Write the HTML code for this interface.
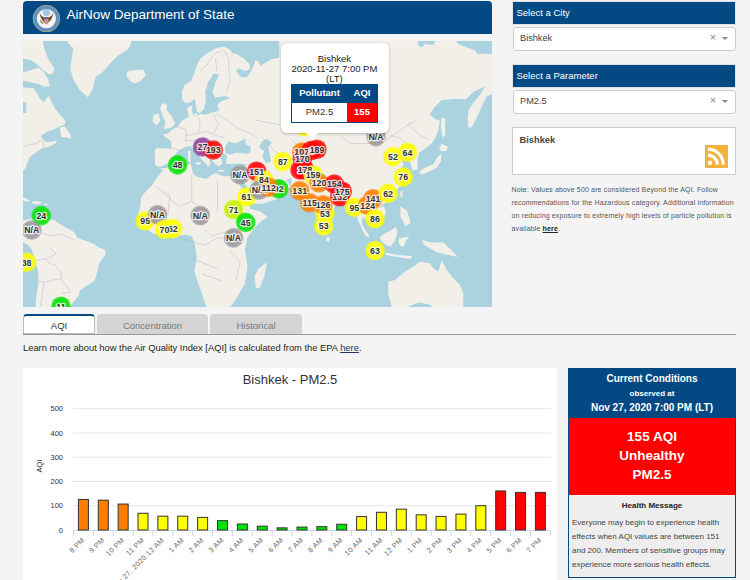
<!DOCTYPE html>
<html><head><meta charset="utf-8">
<style>
*{margin:0;padding:0;box-sizing:border-box}
html,body{width:750px;height:580px;overflow:hidden;background:#f4f4f4;font-family:"Liberation Sans",sans-serif;color:#333}
.abs{position:absolute}
#hdr{left:23px;top:1px;width:469px;height:33px;background:#034a84;border-radius:4px 4px 0 0}
#hdr .t{left:43.5px;top:6.3px;color:#fff;font-size:13.5px;white-space:nowrap}
#map{left:23px;top:41px;width:469px;height:266px;background:#aad3df;overflow:hidden}
.ph{left:512px;width:224px;height:24px;background:#034a84;color:#fff;font-size:9.5px;padding:5px 0 0 3.5px;border:1px solid #e2e2e2}
.sel{left:512.5px;width:223px;height:24px;background:#fff;border:1px solid #ccc;border-radius:3px;font-size:9.2px;color:#444;padding:5.6px 0 0 6.5px}
.sel .x{position:absolute;left:196.3px;top:3.5px;color:#888;font-size:11px}
.sel .ar{position:absolute;left:208.3px;top:9.2px;width:0;height:0;border-left:3px solid transparent;border-right:3px solid transparent;border-top:3px solid #888}
#cbox{left:512.3px;top:127.3px;width:223.4px;height:47.7px;background:#fff;border:1px solid #ccc}
#cbox .n{left:6.2px;top:7px;font-size:9.3px;font-weight:bold;color:#444}
#rss{left:705px;top:145px;width:23px;height:23px;background:#f2b23c;overflow:hidden}
#note{left:511.5px;top:182.8px;width:229px;font-size:7px;letter-spacing:0.15px;line-height:13px;color:#555}
#note b{color:#222;text-decoration:underline}
.tab{top:314px;height:20px;font-size:9.5px;text-align:center;padding-top:5.5px;border-radius:4px 4px 0 0}
#t1{left:23px;width:72px;background:#fff;border:1px solid #bbb;border-top:2px solid #034a84;color:#333;padding-top:3.6px}
#t2{left:97px;width:111px;background:#d4d4d4;color:#777}
#t3{left:210px;width:92px;background:#d4d4d4;color:#777}
#hr{left:23px;top:333.6px;width:713px;height:1.2px;background:#999}
#learn{left:23px;top:343px;font-size:9.35px;color:#222;white-space:nowrap}
#learn u{color:#1f3560}
#chart{left:23px;top:368px;width:534px;height:212px;background:#fff}
#cc{left:568px;top:368px;width:168px;height:210px;border:1px solid #034a84;background:#eee}
#cchead{left:0;top:0;width:166px;height:49px;background:#034a84;color:#fff;text-align:center;font-weight:bold}
#ccred{left:0;top:49px;width:166px;height:76.5px;background:#f00;color:#fff;text-align:center;font-weight:bold;font-size:13.5px;line-height:19.1px;padding-top:60px}
#hm{left:0;top:132px;width:166px;text-align:center;font-weight:bold;font-size:8px;color:#222}
#hmt{left:3px;top:147px;width:160px;font-size:8px;line-height:14px;color:#444}

#pop{left:281px;top:43px;width:108px;height:90px;background:#fff;border-radius:6px;box-shadow:0 1px 3px rgba(0,0,0,0.25)}
#poptip{left:305.8px;top:132.8px;width:0;height:0;border-left:6.6px solid transparent;border-right:6.6px solid transparent;border-top:6px solid #fff}
#pop .l{position:absolute;left:-0.6px;width:108px;text-align:center;font-size:9.5px;color:#222;line-height:10px}
#ptab{left:291px;top:84px;width:87px;height:39px;border:1px solid #034a84;background:#fff}
#ptab .h{position:absolute;left:0;top:0;width:85px;height:18px;background:#034a84}
#ptab .h1{position:absolute;left:0;top:2.3px;width:55px;text-align:center;color:#fff;font-weight:bold;font-size:9.5px}
#ptab .h2{position:absolute;left:55px;top:2.3px;width:30px;text-align:center;color:#fff;font-weight:bold;font-size:9.5px}
#ptab .c1{position:absolute;left:0;top:21px;width:55px;text-align:center;color:#333;font-size:9.5px}
#ptab .c2{position:absolute;left:55px;top:18px;width:30px;height:19px;background:#f00;text-align:center;color:#fff;font-weight:bold;font-size:9.5px;padding-top:3px}
</style></head><body>
<div id="hdr" class="abs">
  <svg class="abs" style="left:9px;top:3px" width="28" height="28" viewBox="0 0 28 28">
    <circle cx="14.4" cy="14.6" r="13.3" fill="#5f8fc6" stroke="#b5ad6a" stroke-width="0.9"/>
    <circle cx="14.4" cy="14.6" r="9.6" fill="#f3f3ef"/>
    <circle cx="14.4" cy="8.6" r="3.6" fill="#a8c8de"/>
    <path d="M7.6 9.2 Q8.6 15 11.6 17.6 L14.4 20.4 L17.2 17.6 Q20.2 15 21.2 9.2 Q19.4 12.6 16.6 13.6 L14.4 13.2 L12.2 13.6 Q9.4 12.6 7.6 9.2Z" fill="#6e4a26"/>
    <path d="M8.4 16.5 Q9.5 19 11.4 19.4" stroke="#5c8a3c" stroke-width="1.3" fill="none"/>
    <path d="M12.3 13.4h4.2v3.4q0 2.4-2.1 3.2q-2.1-.8-2.1-3.2z" fill="#d98a8f"/>
    <rect x="12.3" y="13.4" width="4.2" height="1.6" fill="#3a5ea6"/>
  </svg>
  <div class="abs t">AirNow Department of State</div>
</div>
<div id="map" class="abs"><svg width="469" height="266" viewBox="23 41 469 266" style="position:absolute;left:0;top:0;font-family:'Liberation Sans',sans-serif">
<rect x="23" y="41" width="469" height="266" fill="#aad3df"/>
<path fill="#f2efe9" d="M20.0 87.2 L33.4 88.3 L36.6 92.4 L39.7 98.6 L43.8 102.2 L47.4 97.6 L49.0 95.5 L51.0 100.7 L54.1 106.9 L59.3 114.1 L63.4 118.3 L65.5 121.4 L64.5 124.5 L59.3 126.6 L53.1 129.7 L46.9 131.7 L40.7 135.9 L42.4 138.4 L45.9 141.9 L50.2 141.9 L57.1 140.2 L55.3 143.6 L48.4 147.1 L42.4 148.3 L37.2 151.4 L30.3 156.6 L27.8 161.7 L25.2 168.6 L21.7 172.1 L20.0 172.1ZM20.0 38.0 L42.4 38.0 L44.3 49.1 L48.0 58.4 L54.5 68.7 L52.6 73.4 L48.9 74.3 L42.4 69.6 L36.8 64.0 L31.2 60.3 L23.7 58.4 L20.0 58.0ZM20.0 73.3 L38.7 67.7 L44.0 72.0 L48.0 78.9 L49.9 86.4 L44.0 86.4 L38.7 84.0 L23.7 80.8 L20.0 80.0ZM66.2 38.0 L66.7 41.2 L69.5 44.4 L73.2 49.1 L71.3 60.3 L70.4 69.6 L73.2 78.9 L79.7 90.1 L88.1 97.6 L92.8 88.3 L95.6 77.1 L102.1 72.4 L109.6 64.0 L117.1 56.5 L128.3 49.1 L131.1 43.5 L131.0 38.0ZM127.3 71.5 L132.0 70.5 L143.2 69.6 L146.0 75.2 L139.5 81.7 L133.9 83.6 L129.2 79.9 L126.4 75.2ZM20.0 221.0 L32.0 218.8 L44.0 220.0 L53.6 219.4 L60.8 224.8 L68.0 228.4 L74.0 232.0 L77.6 238.0 L84.8 240.4 L94.4 244.0 L97.2 246.7 L105.2 250.0 L105.5 254.8 L99.2 263.2 L96.8 274.0 L94.4 281.2 L86.0 286.0 L80.0 290.8 L78.8 295.6 L74.0 301.6 L70.4 306.4 L68.0 315.0 L35.0 315.0 L35.6 306.4 L36.2 298.0 L37.4 289.6 L38.6 281.2 L38.0 271.6 L35.6 260.8 L32.0 250.0 L28.0 245.0 L20.0 240.0ZM154.8 150.3 L154.8 157.7 L155.3 165.2 L158.5 166.8 L160.0 168.5 L163.1 170.0 L157.6 176.9 L152.1 185.2 L145.2 192.1 L141.0 197.6 L140.3 205.9 L138.3 214.1 L141.0 225.2 L153.4 233.4 L164.5 237.6 L175.5 236.2 L185.2 234.8 L192.1 236.2 L194.8 244.5 L196.7 256.9 L194.3 271.4 L199.1 285.8 L206.4 307.1 L206.0 320.0 L225.0 320.0 L230.5 307.1 L235.3 300.3 L245.0 283.4 L247.4 266.5 L245.0 249.6 L247.4 237.6 L254.6 227.9 L261.9 220.7 L267.9 217.1 L259.5 211.0 L249.8 208.6 L248.5 203.5 L262.0 204.0 L276.0 199.5 L286.0 192.0 L290.8 186.0 L286.0 180.0 L292.0 178.0 L290.7 186.6 L304.5 203.1 L315.5 211.4 L322.4 230.0 L323.8 236.0 L330.7 215.5 L334.8 205.9 L344.5 203.1 L350.0 200.3 L355.0 210.0 L357.0 216.0 L358.5 221.5 L360.4 225.3 L363.2 231.7 L366.0 236.5 L369.3 237.8 L368.4 234.0 L364.8 229.0 L362.5 225.0 L361.8 220.0 L363.0 217.0 L366.0 219.5 L372.0 222.0 L378.0 226.0 L383.0 220.0 L386.0 212.0 L384.0 206.0 L377.6 207.9 L385.9 202.4 L395.5 191.4 L401.0 185.0 L399.0 178.0 L399.0 170.0 L403.8 165.0 L402.0 161.0 L405.0 158.0 L409.0 157.6 L410.7 164.5 L412.4 170.5 L417.6 169.7 L417.6 159.3 L419.3 152.4 L424.5 149.0 L431.4 143.8 L435.7 136.9 L438.3 130.0 L440.0 120.8 L434.8 119.0 L429.7 113.9 L434.0 107.8 L441.7 100.1 L455.5 98.7 L465.9 99.2 L472.8 92.3 L481.4 88.0 L484.8 87.1 L479.7 94.9 L472.8 103.5 L468.4 110.4 L467.6 119.0 L468.4 127.7 L471.0 127.7 L476.2 119.0 L481.4 107.0 L486.6 96.6 L493.4 93.2 L495.0 93.0 L495.0 38.0 L279.2 38.0 L279.2 57.8 L272.0 59.0 L263.6 63.8 L260.0 66.2 L258.8 61.4 L255.2 60.2 L254.0 65.0 L250.4 72.2 L246.8 77.6 L240.8 77.0 L236.0 71.0 L238.4 68.6 L245.6 71.0 L250.4 68.6 L249.2 63.8 L244.4 59.0 L237.2 54.2 L232.4 53.0 L230.0 49.4 L224.0 46.4 L215.6 48.2 L207.2 53.0 L200.0 59.0 L196.6 66.0 L194.0 73.8 L191.4 80.7 L184.5 85.0 L181.9 92.7 L182.4 100.0 L186.3 103.5 L187.3 107.8 L187.9 114.2 L189.5 116.3 L187.3 117.4 L182.0 120.6 L177.7 127.0 L171.3 130.2 L168.1 133.4 L162.8 134.5 L166.0 137.7 L170.3 140.3 L171.3 144.0 L171.3 148.7 L162.8 148.3 L156.4 148.1Z"/>
<path fill="#aad3df" d="M20.0 101.7 L26.2 102.5 L26.2 113.1 L20.0 113.1ZM455.5 38.0 L495.0 38.0 L495.0 54.4 L483.1 53.5 L477.9 54.4 L474.5 50.1 L462.4 45.8 L457.2 43.2ZM417.6 38.0 L437.4 38.0 L433.1 44.9 L424.5 44.0 L421.9 47.5 L418.4 45.8ZM213.5 73.5 L219.1 74.4 L215.3 82.8 L212.5 92.1 L215.3 97.7 L224.7 95.9 L230.3 97.7 L220.9 101.5 L217.2 105.2 L219.1 110.8 L211.6 112.7 L206.0 114.5 L200.4 114.0 L197.0 116.0 L195.9 113.1 L200.4 112.7 L204.1 108.9 L206.0 99.6 L205.1 92.1 L207.9 82.8ZM183.0 103.6 L186.3 103.5 L191.6 101.4 L194.8 98.2 L195.9 105.7 L196.9 112.1 L200.1 113.7 L197.0 116.0 L193.7 115.3 L191.6 111.0 L192.7 106.7 L190.5 105.7 L187.3 107.8 L184.0 106.0ZM158.5 167.3 L162.8 165.7 L168.1 163.1 L173.5 156.7 L177.7 151.3 L185.2 147.1 L190.5 146.0 L196.0 143.0 L201.0 143.0 L208.0 150.0 L214.0 154.0 L223.0 153.0 L227.0 156.0 L226.0 164.0 L241.4 163.6 L246.6 164.5 L244.0 169.7 L240.0 177.0 L231.0 176.2 L222.4 176.2 L215.5 173.1 L209.7 175.9 L206.5 179.1 L198.0 176.9 L193.7 174.8 L192.1 169.5 L190.5 163.1 L187.3 165.2 L178.8 166.8 L160.7 168.4ZM225.8 145.3 L228.6 141.5 L235.1 143.4 L241.7 140.6 L245.4 138.7 L245.4 144.3 L251.0 147.1 L250.1 152.7 L247.3 153.7 L237.0 152.7 L230.5 154.6 L225.8 153.7 L224.9 149.9ZM262.4 140.7 L267.6 139.0 L271.9 142.4 L268.4 145.9 L269.7 154.5 L271.4 161.4 L265.9 163.1 L262.4 156.2 L264.1 151.0 L259.0 147.6ZM238.0 178.0 L241.0 178.0 L249.0 190.0 L252.0 197.0 L249.8 203.0 L247.0 201.0 L244.0 193.0 L239.0 183.0Z"/>
<path fill="#f2efe9" d="M59.7 127.2 L64.8 126.4 L69.1 132.4 L71.7 138.4 L66.6 137.6 L61.4 136.7ZM20.0 197.1 L25.2 197.9 L30.3 201.0 L26.9 201.7 L20.0 199.7ZM32.1 201.4 L37.2 201.0 L42.4 203.1 L37.2 204.5 L32.9 204.0ZM44.0 203.8 L47.6 203.8 L47.6 205.0 L44.0 205.0ZM194.5 113.0 L197.0 113.5 L197.0 115.5 L194.5 115.5ZM162.1 103.1 L167.2 104.8 L166.4 110.0 L172.4 116.9 L175.0 123.8 L170.7 128.1 L163.8 129.0 L165.5 122.0 L162.1 115.1 L160.3 108.2ZM153.4 115.1 L158.6 113.4 L160.3 120.3 L156.9 125.5 L152.6 122.0ZM190.5 146.0 L198.0 155.6 L203.3 160.9 L206.5 164.1 L208.0 167.0 L210.5 164.0 L209.5 160.0 L212.0 158.5 L207.0 154.0 L201.0 148.0 L197.0 143.5ZM208.0 150.0 L214.0 154.0 L212.1 160.2 L215.5 164.5 L219.0 166.2 L222.4 163.6 L220.7 157.6 L223.0 153.0ZM187.9 150.3 L190.5 151.3 L190.5 162.0 L188.4 162.0ZM196.0 162.0 L201.0 162.5 L200.0 165.0 L196.0 164.0ZM218.0 170.0 L224.0 170.0 L224.0 171.5 L218.0 171.5ZM238.0 166.5 L242.0 166.0 L241.0 168.0ZM266.7 264.1 L264.3 276.2 L259.5 288.2 L255.8 288.2 L254.6 276.2 L258.3 268.9 L265.5 262.9ZM327.0 236.0 L330.0 238.0 L329.0 242.0 L326.0 241.0ZM441.7 154.1 L440.9 161.0 L436.6 167.9 L429.7 171.4 L421.0 174.8 L419.3 171.4 L424.5 167.9 L433.1 164.5 L438.3 155.9ZM441.7 143.8 L447.8 146.4 L446.9 150.7 L441.7 151.6 L439.1 149.0ZM441.7 117.3 L445.2 119.0 L445.2 134.6 L442.6 138.0 L440.9 127.7ZM400.3 192.1 L402.9 190.3 L402.1 197.2 L400.3 196.4ZM400.3 205.9 L407.2 211.0 L410.7 223.1 L405.5 226.6 L400.3 216.2ZM379.5 237.4 L384.2 233.7 L391.7 229.9 L395.4 227.1 L397.3 229.9 L396.3 236.5 L394.5 241.1 L390.7 246.7 L386.1 244.9 L382.3 242.1ZM399.1 238.3 L409.4 236.5 L405.7 241.1 L403.8 246.7 L400.1 245.8 L398.7 242.1ZM385.1 252.3 L397.3 255.1 L412.2 256.1 L410.3 258.9 L397.3 257.0 L386.1 255.1ZM421.7 240.0 L431.3 242.4 L443.4 242.4 L450.6 249.6 L457.9 256.9 L445.8 254.4 L436.2 252.0 L424.1 244.8ZM388.3 281.7 L395.0 280.0 L405.0 271.7 L413.3 266.7 L420.0 261.7 L430.0 263.3 L433.3 268.3 L438.3 271.7 L441.7 260.0 L446.7 270.0 L453.3 278.3 L460.0 285.0 L463.3 293.3 L463.3 306.7 L463.0 308.0 L433.3 308.0 L433.3 306.7 L428.3 304.2 L418.3 302.5 L408.3 306.7 L408.0 308.0 L391.7 308.0 L391.7 306.7 L388.3 295.0Z"/>
<path fill="none" stroke="#bf9fc0" stroke-opacity="0.6" stroke-width="0.7" d="M171.3 148.3 L182.0 150.5M177.7 127.0 L185.2 129.1 L186.3 135.5 L185.2 140.9 L196.9 139.8 L205.5 137.7M199.0 117.4 L200.1 125.9 L198.0 132.3M185.2 135.5 L198.0 133.4 L205.5 131.3 L216.1 135.5 L224.7 137.7M214.0 114.2 L218.3 124.9 L214.0 132.3M216.1 114.2 L224.7 118.5 L230.0 122.7 L238.0 128.0 L250.0 133.0 L258.0 138.0M200.0 71.0 L207.2 65.0 L212.0 56.6 L215.6 53.0 L222.8 50.6M215.6 59.0 L216.8 71.0M224.0 50.6 L228.8 59.0 L228.8 71.0 L230.0 80.6 L226.4 92.6M155.5 185.9 L178.8 206.5 L191.7 201.4 L207.2 211.7M191.7 175.5 L191.7 201.4M217.6 180.7 L217.6 211.7M178.8 237.6 L204.7 245.3 L217.6 237.6 L238.3 240.2M191.7 258.3 L217.6 268.6M202.0 273.8 L222.8 281.5M225.3 211.7 L243.4 219.5M163.0 190.0 L170.0 196.0 L168.0 215.0M205.0 230.0 L212.0 236.0 L225.0 232.0 L235.0 236.0M230.0 250.0 L240.0 262.0 L236.0 280.0M35.6 260.8 L40.4 259.6 L46.4 258.4 L48.8 263.2 L56.0 265.6 L62.0 274.0 L60.8 278.8 L53.6 280.0 L44.0 282.4 L39.2 281.2M44.0 282.4 L40.4 306.4M60.8 278.8 L68.0 288.4 L70.4 292.0 L62.0 293.2M40.0 232.0 L50.0 236.0 L60.0 234.0 L75.0 240.0M50.0 248.0 L56.0 254.0 L48.0 258.0M23.1 147.1 L30.3 144.5 L37.2 143.6 L40.7 139.3 L43.3 142.8 L44.1 147.1M341.0 136.4 L350.8 143.6 L370.0 143.6 L384.4 141.2 L398.8 131.6 L408.4 124.4 L418.0 119.6M408.4 124.4 L418.0 134.0 L427.6 138.8M262.0 136.4 L274.0 150.8 L286.0 158.0M290.8 138.8 L298.0 146.0 L300.4 153.2M248.0 165.0 L258.0 162.0 L268.0 170.0 L272.0 178.0M250.0 180.0 L265.0 185.0 L285.0 195.0M355.0 200.0 L362.0 210.0 L370.0 205.0 L375.0 210.0M255.0 120.0 L280.0 125.0 L300.0 132.0M390.0 135.0 L400.0 138.0 L412.0 148.0"/>
<circle cx="61.0" cy="306.3" r="9.8" fill="#00e400" fill-opacity="0.75"/><circle cx="61.0" cy="306.3" r="8.3" fill="#00e400" fill-opacity="0.6"/>
<circle cx="26.6" cy="262.3" r="9.8" fill="#ffff00" fill-opacity="0.75"/><circle cx="26.6" cy="262.3" r="8.3" fill="#ffff00" fill-opacity="0.6"/>
<circle cx="41.3" cy="215.6" r="9.8" fill="#00e400" fill-opacity="0.75"/><circle cx="41.3" cy="215.6" r="8.3" fill="#00e400" fill-opacity="0.6"/>
<circle cx="31.8" cy="230.0" r="9.8" fill="#999999" fill-opacity="0.75"/><circle cx="31.8" cy="230.0" r="8.3" fill="#999999" fill-opacity="0.6"/>
<circle cx="177.6" cy="164.9" r="9.8" fill="#00e400" fill-opacity="0.75"/><circle cx="177.6" cy="164.9" r="8.3" fill="#00e400" fill-opacity="0.6"/>
<circle cx="145.2" cy="221.0" r="9.8" fill="#ffff00" fill-opacity="0.75"/><circle cx="145.2" cy="221.0" r="8.3" fill="#ffff00" fill-opacity="0.6"/>
<circle cx="157.6" cy="214.8" r="9.8" fill="#999999" fill-opacity="0.75"/><circle cx="157.6" cy="214.8" r="8.3" fill="#999999" fill-opacity="0.6"/>
<circle cx="172.8" cy="228.6" r="9.8" fill="#ffff00" fill-opacity="0.75"/><circle cx="172.8" cy="228.6" r="8.3" fill="#ffff00" fill-opacity="0.6"/>
<circle cx="164.5" cy="229.3" r="9.8" fill="#ffff00" fill-opacity="0.75"/><circle cx="164.5" cy="229.3" r="8.3" fill="#ffff00" fill-opacity="0.6"/>
<circle cx="200.3" cy="215.5" r="9.8" fill="#999999" fill-opacity="0.75"/><circle cx="200.3" cy="215.5" r="8.3" fill="#999999" fill-opacity="0.6"/>
<circle cx="202.5" cy="147.0" r="9.8" fill="#8f3f97" fill-opacity="0.75"/><circle cx="202.5" cy="147.0" r="8.3" fill="#8f3f97" fill-opacity="0.6"/>
<circle cx="213.3" cy="150.0" r="9.8" fill="#ff0000" fill-opacity="0.75"/><circle cx="213.3" cy="150.0" r="8.3" fill="#ff0000" fill-opacity="0.6"/>
<circle cx="240.0" cy="174.7" r="9.8" fill="#999999" fill-opacity="0.75"/><circle cx="240.0" cy="174.7" r="8.3" fill="#999999" fill-opacity="0.6"/>
<circle cx="256.7" cy="171.3" r="9.8" fill="#ff0000" fill-opacity="0.75"/><circle cx="256.7" cy="171.3" r="8.3" fill="#ff0000" fill-opacity="0.6"/>
<circle cx="264.0" cy="180.0" r="9.8" fill="#ffff00" fill-opacity="0.75"/><circle cx="264.0" cy="180.0" r="8.3" fill="#ffff00" fill-opacity="0.6"/>
<circle cx="246.5" cy="197.0" r="9.8" fill="#ffff00" fill-opacity="0.75"/><circle cx="246.5" cy="197.0" r="8.3" fill="#ffff00" fill-opacity="0.6"/>
<circle cx="233.6" cy="209.5" r="9.8" fill="#c8f000" fill-opacity="0.75"/><circle cx="233.6" cy="209.5" r="8.3" fill="#c8f000" fill-opacity="0.6"/>
<circle cx="245.7" cy="222.4" r="9.8" fill="#00e400" fill-opacity="0.75"/><circle cx="245.7" cy="222.4" r="8.3" fill="#00e400" fill-opacity="0.6"/>
<circle cx="233.6" cy="237.9" r="9.8" fill="#999999" fill-opacity="0.75"/><circle cx="233.6" cy="237.9" r="8.3" fill="#999999" fill-opacity="0.6"/>
<circle cx="259.3" cy="190.0" r="9.8" fill="#999999" fill-opacity="0.75"/><circle cx="259.3" cy="190.0" r="8.3" fill="#999999" fill-opacity="0.6"/>
<circle cx="278.7" cy="188.7" r="9.8" fill="#00e400" fill-opacity="0.75"/><circle cx="278.7" cy="188.7" r="8.3" fill="#00e400" fill-opacity="0.6"/>
<circle cx="268.7" cy="187.3" r="9.8" fill="#ff7e00" fill-opacity="0.75"/><circle cx="268.7" cy="187.3" r="8.3" fill="#ff7e00" fill-opacity="0.6"/>
<circle cx="282.8" cy="161.5" r="9.8" fill="#ffff00" fill-opacity="0.75"/><circle cx="282.8" cy="161.5" r="8.3" fill="#ffff00" fill-opacity="0.6"/>
<circle cx="305.0" cy="126.8" r="9.8" fill="#ffff00" fill-opacity="0.75"/><circle cx="305.0" cy="126.8" r="8.3" fill="#ffff00" fill-opacity="0.6"/>
<circle cx="301.7" cy="152.0" r="9.8" fill="#ff7e00" fill-opacity="0.75"/><circle cx="301.7" cy="152.0" r="8.3" fill="#ff7e00" fill-opacity="0.6"/>
<circle cx="311.0" cy="150.5" r="9.8" fill="#ff0000" fill-opacity="0.75"/><circle cx="311.0" cy="150.5" r="8.3" fill="#ff0000" fill-opacity="0.6"/>
<circle cx="317.0" cy="149.3" r="9.8" fill="#ff0000" fill-opacity="0.75"/><circle cx="317.0" cy="149.3" r="8.3" fill="#ff0000" fill-opacity="0.6"/>
<circle cx="302.3" cy="158.7" r="9.8" fill="#ff0000" fill-opacity="0.75"/><circle cx="302.3" cy="158.7" r="8.3" fill="#ff0000" fill-opacity="0.6"/>
<circle cx="300.0" cy="170.0" r="9.8" fill="#ff0000" fill-opacity="0.75"/><circle cx="300.0" cy="170.0" r="8.3" fill="#ff0000" fill-opacity="0.6"/>
<circle cx="305.0" cy="170.0" r="9.8" fill="#ff0000" fill-opacity="0.75"/><circle cx="305.0" cy="170.0" r="8.3" fill="#ff0000" fill-opacity="0.6"/>
<circle cx="313.0" cy="174.7" r="9.8" fill="#ffff00" fill-opacity="0.75"/><circle cx="313.0" cy="174.7" r="8.3" fill="#ffff00" fill-opacity="0.6"/>
<circle cx="319.0" cy="182.7" r="9.8" fill="#ff7e00" fill-opacity="0.75"/><circle cx="319.0" cy="182.7" r="8.3" fill="#ff7e00" fill-opacity="0.6"/>
<circle cx="299.7" cy="190.7" r="9.8" fill="#ff7e00" fill-opacity="0.75"/><circle cx="299.7" cy="190.7" r="8.3" fill="#ff7e00" fill-opacity="0.6"/>
<circle cx="334.3" cy="184.0" r="9.8" fill="#ff0000" fill-opacity="0.75"/><circle cx="334.3" cy="184.0" r="8.3" fill="#ff0000" fill-opacity="0.6"/>
<circle cx="339.7" cy="196.7" r="9.8" fill="#ff0000" fill-opacity="0.75"/><circle cx="339.7" cy="196.7" r="8.3" fill="#ff0000" fill-opacity="0.6"/>
<circle cx="342.3" cy="191.3" r="9.8" fill="#ff0000" fill-opacity="0.75"/><circle cx="342.3" cy="191.3" r="8.3" fill="#ff0000" fill-opacity="0.6"/>
<circle cx="323.7" cy="226.0" r="9.8" fill="#ffff00" fill-opacity="0.75"/><circle cx="323.7" cy="226.0" r="8.3" fill="#ffff00" fill-opacity="0.6"/>
<circle cx="325.0" cy="213.3" r="9.8" fill="#ffff00" fill-opacity="0.75"/><circle cx="325.0" cy="213.3" r="8.3" fill="#ffff00" fill-opacity="0.6"/>
<circle cx="323.0" cy="204.7" r="9.8" fill="#ff7e00" fill-opacity="0.75"/><circle cx="323.0" cy="204.7" r="8.3" fill="#ff7e00" fill-opacity="0.6"/>
<circle cx="309.7" cy="202.7" r="9.8" fill="#ff7e00" fill-opacity="0.75"/><circle cx="309.7" cy="202.7" r="8.3" fill="#ff7e00" fill-opacity="0.6"/>
<circle cx="354.3" cy="207.3" r="9.8" fill="#ffff00" fill-opacity="0.75"/><circle cx="354.3" cy="207.3" r="8.3" fill="#ffff00" fill-opacity="0.6"/>
<circle cx="373.0" cy="198.7" r="9.8" fill="#ff7e00" fill-opacity="0.75"/><circle cx="373.0" cy="198.7" r="8.3" fill="#ff7e00" fill-opacity="0.6"/>
<circle cx="367.7" cy="205.3" r="9.8" fill="#ff7e00" fill-opacity="0.75"/><circle cx="367.7" cy="205.3" r="8.3" fill="#ff7e00" fill-opacity="0.6"/>
<circle cx="375.0" cy="218.7" r="9.8" fill="#ffff00" fill-opacity="0.75"/><circle cx="375.0" cy="218.7" r="8.3" fill="#ffff00" fill-opacity="0.6"/>
<circle cx="375.0" cy="250.5" r="9.8" fill="#ffff00" fill-opacity="0.75"/><circle cx="375.0" cy="250.5" r="8.3" fill="#ffff00" fill-opacity="0.6"/>
<circle cx="388.1" cy="193.4" r="9.8" fill="#ffff00" fill-opacity="0.75"/><circle cx="388.1" cy="193.4" r="8.3" fill="#ffff00" fill-opacity="0.6"/>
<circle cx="403.2" cy="177.1" r="9.8" fill="#ffff00" fill-opacity="0.75"/><circle cx="403.2" cy="177.1" r="8.3" fill="#ffff00" fill-opacity="0.6"/>
<circle cx="392.9" cy="156.6" r="9.8" fill="#ffff00" fill-opacity="0.75"/><circle cx="392.9" cy="156.6" r="8.3" fill="#ffff00" fill-opacity="0.6"/>
<circle cx="407.4" cy="152.3" r="9.8" fill="#ffff00" fill-opacity="0.75"/><circle cx="407.4" cy="152.3" r="8.3" fill="#ffff00" fill-opacity="0.6"/>
<circle cx="376.0" cy="136.6" r="9.8" fill="#999999" fill-opacity="0.75"/><circle cx="376.0" cy="136.6" r="8.3" fill="#999999" fill-opacity="0.6"/>
<text x="61.0" y="309.5" font-size="8.8" font-weight="bold" text-anchor="middle" fill="#333" stroke="#fff" stroke-width="2.4" stroke-opacity="0.8" stroke-linejoin="round" paint-order="stroke">11</text>
<text x="26.6" y="265.5" font-size="8.8" font-weight="bold" text-anchor="middle" fill="#333" stroke="#fff" stroke-width="2.4" stroke-opacity="0.8" stroke-linejoin="round" paint-order="stroke">38</text>
<text x="41.3" y="218.8" font-size="8.8" font-weight="bold" text-anchor="middle" fill="#333" stroke="#fff" stroke-width="2.4" stroke-opacity="0.8" stroke-linejoin="round" paint-order="stroke">24</text>
<text x="31.8" y="233.2" font-size="8.8" font-weight="bold" text-anchor="middle" fill="#333" stroke="#fff" stroke-width="2.4" stroke-opacity="0.8" stroke-linejoin="round" paint-order="stroke">N/A</text>
<text x="177.6" y="168.1" font-size="8.8" font-weight="bold" text-anchor="middle" fill="#333" stroke="#fff" stroke-width="2.4" stroke-opacity="0.8" stroke-linejoin="round" paint-order="stroke">48</text>
<text x="145.2" y="224.2" font-size="8.8" font-weight="bold" text-anchor="middle" fill="#333" stroke="#fff" stroke-width="2.4" stroke-opacity="0.8" stroke-linejoin="round" paint-order="stroke">95</text>
<text x="157.6" y="218.0" font-size="8.8" font-weight="bold" text-anchor="middle" fill="#333" stroke="#fff" stroke-width="2.4" stroke-opacity="0.8" stroke-linejoin="round" paint-order="stroke">N/A</text>
<text x="172.8" y="231.8" font-size="8.8" font-weight="bold" text-anchor="middle" fill="#333" stroke="#fff" stroke-width="2.4" stroke-opacity="0.8" stroke-linejoin="round" paint-order="stroke">62</text>
<text x="164.5" y="232.5" font-size="8.8" font-weight="bold" text-anchor="middle" fill="#333" stroke="#fff" stroke-width="2.4" stroke-opacity="0.8" stroke-linejoin="round" paint-order="stroke">70</text>
<text x="200.3" y="218.7" font-size="8.8" font-weight="bold" text-anchor="middle" fill="#333" stroke="#fff" stroke-width="2.4" stroke-opacity="0.8" stroke-linejoin="round" paint-order="stroke">N/A</text>
<text x="202.5" y="150.2" font-size="8.8" font-weight="bold" text-anchor="middle" fill="#333" stroke="#fff" stroke-width="2.4" stroke-opacity="0.8" stroke-linejoin="round" paint-order="stroke">27</text>
<text x="213.3" y="153.2" font-size="8.8" font-weight="bold" text-anchor="middle" fill="#333" stroke="#fff" stroke-width="2.4" stroke-opacity="0.8" stroke-linejoin="round" paint-order="stroke">193</text>
<text x="240.0" y="177.9" font-size="8.8" font-weight="bold" text-anchor="middle" fill="#333" stroke="#fff" stroke-width="2.4" stroke-opacity="0.8" stroke-linejoin="round" paint-order="stroke">N/A</text>
<text x="256.7" y="174.5" font-size="8.8" font-weight="bold" text-anchor="middle" fill="#333" stroke="#fff" stroke-width="2.4" stroke-opacity="0.8" stroke-linejoin="round" paint-order="stroke">151</text>
<text x="264.0" y="183.2" font-size="8.8" font-weight="bold" text-anchor="middle" fill="#333" stroke="#fff" stroke-width="2.4" stroke-opacity="0.8" stroke-linejoin="round" paint-order="stroke">84</text>
<text x="246.5" y="200.2" font-size="8.8" font-weight="bold" text-anchor="middle" fill="#333" stroke="#fff" stroke-width="2.4" stroke-opacity="0.8" stroke-linejoin="round" paint-order="stroke">61</text>
<text x="233.6" y="212.7" font-size="8.8" font-weight="bold" text-anchor="middle" fill="#333" stroke="#fff" stroke-width="2.4" stroke-opacity="0.8" stroke-linejoin="round" paint-order="stroke">71</text>
<text x="245.7" y="225.6" font-size="8.8" font-weight="bold" text-anchor="middle" fill="#333" stroke="#fff" stroke-width="2.4" stroke-opacity="0.8" stroke-linejoin="round" paint-order="stroke">45</text>
<text x="233.6" y="241.1" font-size="8.8" font-weight="bold" text-anchor="middle" fill="#333" stroke="#fff" stroke-width="2.4" stroke-opacity="0.8" stroke-linejoin="round" paint-order="stroke">N/A</text>
<text x="259.3" y="193.2" font-size="8.8" font-weight="bold" text-anchor="middle" fill="#333" stroke="#fff" stroke-width="2.4" stroke-opacity="0.8" stroke-linejoin="round" paint-order="stroke">N/A</text>
<text x="278.7" y="191.9" font-size="8.8" font-weight="bold" text-anchor="middle" fill="#333" stroke="#fff" stroke-width="2.4" stroke-opacity="0.8" stroke-linejoin="round" paint-order="stroke">92</text>
<text x="268.7" y="190.5" font-size="8.8" font-weight="bold" text-anchor="middle" fill="#333" stroke="#fff" stroke-width="2.4" stroke-opacity="0.8" stroke-linejoin="round" paint-order="stroke">112</text>
<text x="282.8" y="164.7" font-size="8.8" font-weight="bold" text-anchor="middle" fill="#333" stroke="#fff" stroke-width="2.4" stroke-opacity="0.8" stroke-linejoin="round" paint-order="stroke">87</text>
<text x="301.7" y="155.2" font-size="8.8" font-weight="bold" text-anchor="middle" fill="#333" stroke="#fff" stroke-width="2.4" stroke-opacity="0.8" stroke-linejoin="round" paint-order="stroke">107</text>
<text x="311.0" y="153.7" font-size="8.8" font-weight="bold" text-anchor="middle" fill="#333" stroke="#fff" stroke-width="2.4" stroke-opacity="0.8" stroke-linejoin="round" paint-order="stroke">1</text>
<text x="317.0" y="152.5" font-size="8.8" font-weight="bold" text-anchor="middle" fill="#333" stroke="#fff" stroke-width="2.4" stroke-opacity="0.8" stroke-linejoin="round" paint-order="stroke">189</text>
<text x="302.3" y="161.9" font-size="8.8" font-weight="bold" text-anchor="middle" fill="#333" stroke="#fff" stroke-width="2.4" stroke-opacity="0.8" stroke-linejoin="round" paint-order="stroke">170</text>
<text x="300.0" y="173.2" font-size="8.8" font-weight="bold" text-anchor="middle" fill="#333" stroke="#fff" stroke-width="2.4" stroke-opacity="0.8" stroke-linejoin="round" paint-order="stroke">1</text>
<text x="305.0" y="173.2" font-size="8.8" font-weight="bold" text-anchor="middle" fill="#333" stroke="#fff" stroke-width="2.4" stroke-opacity="0.8" stroke-linejoin="round" paint-order="stroke">178</text>
<text x="313.0" y="177.9" font-size="8.8" font-weight="bold" text-anchor="middle" fill="#333" stroke="#fff" stroke-width="2.4" stroke-opacity="0.8" stroke-linejoin="round" paint-order="stroke">159</text>
<text x="319.0" y="185.9" font-size="8.8" font-weight="bold" text-anchor="middle" fill="#333" stroke="#fff" stroke-width="2.4" stroke-opacity="0.8" stroke-linejoin="round" paint-order="stroke">120</text>
<text x="299.7" y="193.9" font-size="8.8" font-weight="bold" text-anchor="middle" fill="#333" stroke="#fff" stroke-width="2.4" stroke-opacity="0.8" stroke-linejoin="round" paint-order="stroke">131</text>
<text x="334.3" y="187.2" font-size="8.8" font-weight="bold" text-anchor="middle" fill="#333" stroke="#fff" stroke-width="2.4" stroke-opacity="0.8" stroke-linejoin="round" paint-order="stroke">154</text>
<text x="339.7" y="199.9" font-size="8.8" font-weight="bold" text-anchor="middle" fill="#333" stroke="#fff" stroke-width="2.4" stroke-opacity="0.8" stroke-linejoin="round" paint-order="stroke">132</text>
<text x="342.3" y="194.5" font-size="8.8" font-weight="bold" text-anchor="middle" fill="#333" stroke="#fff" stroke-width="2.4" stroke-opacity="0.8" stroke-linejoin="round" paint-order="stroke">175</text>
<text x="323.7" y="229.2" font-size="8.8" font-weight="bold" text-anchor="middle" fill="#333" stroke="#fff" stroke-width="2.4" stroke-opacity="0.8" stroke-linejoin="round" paint-order="stroke">53</text>
<text x="325.0" y="216.5" font-size="8.8" font-weight="bold" text-anchor="middle" fill="#333" stroke="#fff" stroke-width="2.4" stroke-opacity="0.8" stroke-linejoin="round" paint-order="stroke">53</text>
<text x="323.0" y="207.9" font-size="8.8" font-weight="bold" text-anchor="middle" fill="#333" stroke="#fff" stroke-width="2.4" stroke-opacity="0.8" stroke-linejoin="round" paint-order="stroke">126</text>
<text x="309.7" y="205.9" font-size="8.8" font-weight="bold" text-anchor="middle" fill="#333" stroke="#fff" stroke-width="2.4" stroke-opacity="0.8" stroke-linejoin="round" paint-order="stroke">115</text>
<text x="354.3" y="210.5" font-size="8.8" font-weight="bold" text-anchor="middle" fill="#333" stroke="#fff" stroke-width="2.4" stroke-opacity="0.8" stroke-linejoin="round" paint-order="stroke">95</text>
<text x="373.0" y="201.9" font-size="8.8" font-weight="bold" text-anchor="middle" fill="#333" stroke="#fff" stroke-width="2.4" stroke-opacity="0.8" stroke-linejoin="round" paint-order="stroke">141</text>
<text x="367.7" y="208.5" font-size="8.8" font-weight="bold" text-anchor="middle" fill="#333" stroke="#fff" stroke-width="2.4" stroke-opacity="0.8" stroke-linejoin="round" paint-order="stroke">124</text>
<text x="375.0" y="221.9" font-size="8.8" font-weight="bold" text-anchor="middle" fill="#333" stroke="#fff" stroke-width="2.4" stroke-opacity="0.8" stroke-linejoin="round" paint-order="stroke">86</text>
<text x="375.0" y="253.7" font-size="8.8" font-weight="bold" text-anchor="middle" fill="#333" stroke="#fff" stroke-width="2.4" stroke-opacity="0.8" stroke-linejoin="round" paint-order="stroke">63</text>
<text x="388.1" y="196.6" font-size="8.8" font-weight="bold" text-anchor="middle" fill="#333" stroke="#fff" stroke-width="2.4" stroke-opacity="0.8" stroke-linejoin="round" paint-order="stroke">62</text>
<text x="403.2" y="180.3" font-size="8.8" font-weight="bold" text-anchor="middle" fill="#333" stroke="#fff" stroke-width="2.4" stroke-opacity="0.8" stroke-linejoin="round" paint-order="stroke">76</text>
<text x="392.9" y="159.8" font-size="8.8" font-weight="bold" text-anchor="middle" fill="#333" stroke="#fff" stroke-width="2.4" stroke-opacity="0.8" stroke-linejoin="round" paint-order="stroke">52</text>
<text x="407.4" y="155.5" font-size="8.8" font-weight="bold" text-anchor="middle" fill="#333" stroke="#fff" stroke-width="2.4" stroke-opacity="0.8" stroke-linejoin="round" paint-order="stroke">64</text>
<text x="376.0" y="139.8" font-size="8.8" font-weight="bold" text-anchor="middle" fill="#333" stroke="#fff" stroke-width="2.4" stroke-opacity="0.8" stroke-linejoin="round" paint-order="stroke">N/A</text>
</svg></div>
<div id="pop" class="abs"><div class="l" style="top:11px">Bishkek</div><div class="l" style="top:21px">2020-11-27 7:00 PM</div><div class="l" style="top:31px">(LT)</div></div>
<div id="poptip" class="abs"></div>
<div id="ptab" class="abs"><div class="h"></div><div class="h1">Pollutant</div><div class="h2">AQI</div><div class="c1">PM2.5</div><div class="c2">155</div></div>


<div class="abs ph" style="top:1px">Select a City</div>
<div class="abs sel" style="top:26.6px">Bishkek<span class="x">×</span><span class="ar"></span></div>
<div class="abs ph" style="top:64.2px">Select a Parameter</div>
<div class="abs sel" style="top:89.6px">PM2.5<span class="x">×</span><span class="ar"></span></div>
<div id="cbox" class="abs"><div class="abs n">Bishkek</div></div>
<div id="rss" class="abs">
  <svg width="23" height="23" viewBox="0 0 23 23"><circle cx="5" cy="17.7" r="2.3" fill="#fff"/><path d="M2.9 10.1A9.4 9.4 0 0 1 12.3 19.5" stroke="#fff" stroke-width="3.2" fill="none"/><path d="M2.9 4.2A15.3 15.3 0 0 1 18.2 19.5" stroke="#fff" stroke-width="3.2" fill="none"/></svg>
</div>
<div id="note" class="abs">Note: Values above 500 are considered Beyond the AQI. Follow recommendations for the Hazardous category. Additional information on reducing exposure to extremely high levels of particle pollution is available <b>here</b>.</div>

<div id="t1" class="abs tab">AQI</div>
<div id="t2" class="abs tab">Concentration</div>
<div id="t3" class="abs tab">Historical</div>
<div id="hr" class="abs"></div>
<div id="learn" class="abs">Learn more about how the Air Quality Index [AQI] is calculated from the EPA <u>here</u>.</div>

<div id="chart" class="abs"><svg width="534" height="212" style="position:absolute;left:0;top:0">
<text x="267.0" y="16.0" font-size="13" fill="#333" text-anchor="middle" font-family="Liberation Sans">Bishkek - PM2.5</text>
<text x="40.0" y="164.6" font-size="7.5" fill="#333" text-anchor="end">0</text>
<rect x="50.0" y="137.24" width="478.0" height="1" fill="#e6e6e6"/>
<text x="40.0" y="140.3" font-size="7.5" fill="#333" text-anchor="end">100</text>
<rect x="50.0" y="112.98" width="478.0" height="1" fill="#e6e6e6"/>
<text x="40.0" y="116.1" font-size="7.5" fill="#333" text-anchor="end">200</text>
<rect x="50.0" y="88.72" width="478.0" height="1" fill="#e6e6e6"/>
<text x="40.0" y="91.8" font-size="7.5" fill="#333" text-anchor="end">300</text>
<rect x="50.0" y="64.46" width="478.0" height="1" fill="#e6e6e6"/>
<text x="40.0" y="67.6" font-size="7.5" fill="#333" text-anchor="end">400</text>
<rect x="50.0" y="40.20" width="478.0" height="1" fill="#e6e6e6"/>
<text x="40.0" y="43.3" font-size="7.5" fill="#333" text-anchor="end">500</text>
<rect x="50.0" y="162.00" width="478.0" height="1" fill="#ccd6eb"/>
<text x="0" y="0" font-size="7.5" fill="#333" text-anchor="middle" transform="translate(18.8,98.0) rotate(-90)">AQI</text>
<rect x="55.41" y="131.43" width="10" height="30.57" fill="#ff7e00" stroke="#333" stroke-width="1"/>
<rect x="49.97" y="162.00" width="1" height="6" fill="#ccd6eb"/>
<text x="0" y="0" font-size="7.1" letter-spacing="0.4" fill="#666" text-anchor="end" transform="translate(62.0,172.5) rotate(-45)">8 PM</text>
<rect x="75.28" y="132.16" width="10" height="29.84" fill="#ff7e00" stroke="#333" stroke-width="1"/>
<rect x="69.84" y="162.00" width="1" height="6" fill="#ccd6eb"/>
<text x="0" y="0" font-size="7.1" letter-spacing="0.4" fill="#666" text-anchor="end" transform="translate(81.9,172.5) rotate(-45)">9 PM</text>
<rect x="95.15" y="136.04" width="10" height="25.96" fill="#ff7e00" stroke="#333" stroke-width="1"/>
<rect x="89.71" y="162.00" width="1" height="6" fill="#ccd6eb"/>
<text x="0" y="0" font-size="7.1" letter-spacing="0.4" fill="#666" text-anchor="end" transform="translate(101.7,172.5) rotate(-45)">10 PM</text>
<rect x="115.01" y="145.26" width="10" height="16.74" fill="#ffff00" stroke="#333" stroke-width="1"/>
<rect x="109.58" y="162.00" width="1" height="6" fill="#ccd6eb"/>
<text x="0" y="0" font-size="7.1" letter-spacing="0.4" fill="#666" text-anchor="end" transform="translate(121.6,172.5) rotate(-45)">11 PM</text>
<rect x="134.88" y="148.17" width="10" height="13.83" fill="#ffff00" stroke="#333" stroke-width="1"/>
<rect x="129.45" y="162.00" width="1" height="6" fill="#ccd6eb"/>
<text x="0" y="0" font-size="7.1" letter-spacing="0.4" fill="#666" text-anchor="end" transform="translate(141.5,172.5) rotate(-45)">Nov 27, 2020 12 AM</text>
<rect x="154.75" y="148.17" width="10" height="13.83" fill="#ffff00" stroke="#333" stroke-width="1"/>
<rect x="149.32" y="162.00" width="1" height="6" fill="#ccd6eb"/>
<text x="0" y="0" font-size="7.1" letter-spacing="0.4" fill="#666" text-anchor="end" transform="translate(161.4,172.5) rotate(-45)">1 AM</text>
<rect x="174.62" y="149.38" width="10" height="12.62" fill="#ffff00" stroke="#333" stroke-width="1"/>
<rect x="169.19" y="162.00" width="1" height="6" fill="#ccd6eb"/>
<text x="0" y="0" font-size="7.1" letter-spacing="0.4" fill="#666" text-anchor="end" transform="translate(181.2,172.5) rotate(-45)">2 AM</text>
<rect x="194.50" y="152.64" width="10" height="9.36" fill="#00e400" stroke="#333" stroke-width="1"/>
<rect x="189.06" y="162.00" width="1" height="6" fill="#ccd6eb"/>
<text x="0" y="0" font-size="7.1" letter-spacing="0.4" fill="#666" text-anchor="end" transform="translate(201.1,172.5) rotate(-45)">3 AM</text>
<rect x="214.37" y="156.01" width="10" height="5.99" fill="#00e400" stroke="#333" stroke-width="1"/>
<rect x="208.93" y="162.00" width="1" height="6" fill="#ccd6eb"/>
<text x="0" y="0" font-size="7.1" letter-spacing="0.4" fill="#666" text-anchor="end" transform="translate(221.0,172.5) rotate(-45)">4 AM</text>
<rect x="234.24" y="158.17" width="10" height="3.83" fill="#00e400" stroke="#333" stroke-width="1"/>
<rect x="228.80" y="162.00" width="1" height="6" fill="#ccd6eb"/>
<text x="0" y="0" font-size="7.1" letter-spacing="0.4" fill="#666" text-anchor="end" transform="translate(240.8,172.5) rotate(-45)">5 AM</text>
<rect x="254.11" y="159.84" width="10" height="2.16" fill="#00e400" stroke="#333" stroke-width="1"/>
<rect x="248.67" y="162.00" width="1" height="6" fill="#ccd6eb"/>
<text x="0" y="0" font-size="7.1" letter-spacing="0.4" fill="#666" text-anchor="end" transform="translate(260.7,172.5) rotate(-45)">6 AM</text>
<rect x="273.98" y="159.11" width="10" height="2.89" fill="#00e400" stroke="#333" stroke-width="1"/>
<rect x="268.54" y="162.00" width="1" height="6" fill="#ccd6eb"/>
<text x="0" y="0" font-size="7.1" letter-spacing="0.4" fill="#666" text-anchor="end" transform="translate(280.6,172.5) rotate(-45)">7 AM</text>
<rect x="293.84" y="158.65" width="10" height="3.35" fill="#00e400" stroke="#333" stroke-width="1"/>
<rect x="288.41" y="162.00" width="1" height="6" fill="#ccd6eb"/>
<text x="0" y="0" font-size="7.1" letter-spacing="0.4" fill="#666" text-anchor="end" transform="translate(300.4,172.5) rotate(-45)">8 AM</text>
<rect x="313.71" y="156.25" width="10" height="5.75" fill="#00e400" stroke="#333" stroke-width="1"/>
<rect x="308.28" y="162.00" width="1" height="6" fill="#ccd6eb"/>
<text x="0" y="0" font-size="7.1" letter-spacing="0.4" fill="#666" text-anchor="end" transform="translate(320.3,172.5) rotate(-45)">9 AM</text>
<rect x="333.58" y="148.56" width="10" height="13.44" fill="#ffff00" stroke="#333" stroke-width="1"/>
<rect x="328.15" y="162.00" width="1" height="6" fill="#ccd6eb"/>
<text x="0" y="0" font-size="7.1" letter-spacing="0.4" fill="#666" text-anchor="end" transform="translate(340.2,172.5) rotate(-45)">10 AM</text>
<rect x="353.45" y="144.29" width="10" height="17.71" fill="#ffff00" stroke="#333" stroke-width="1"/>
<rect x="348.02" y="162.00" width="1" height="6" fill="#ccd6eb"/>
<text x="0" y="0" font-size="7.1" letter-spacing="0.4" fill="#666" text-anchor="end" transform="translate(360.1,172.5) rotate(-45)">11 AM</text>
<rect x="373.32" y="141.14" width="10" height="20.86" fill="#ffff00" stroke="#333" stroke-width="1"/>
<rect x="367.89" y="162.00" width="1" height="6" fill="#ccd6eb"/>
<text x="0" y="0" font-size="7.1" letter-spacing="0.4" fill="#666" text-anchor="end" transform="translate(379.9,172.5) rotate(-45)">12 PM</text>
<rect x="393.19" y="146.84" width="10" height="15.16" fill="#ffff00" stroke="#333" stroke-width="1"/>
<rect x="387.76" y="162.00" width="1" height="6" fill="#ccd6eb"/>
<text x="0" y="0" font-size="7.1" letter-spacing="0.4" fill="#666" text-anchor="end" transform="translate(399.8,172.5) rotate(-45)">1 PM</text>
<rect x="413.06" y="148.41" width="10" height="13.59" fill="#ffff00" stroke="#333" stroke-width="1"/>
<rect x="407.63" y="162.00" width="1" height="6" fill="#ccd6eb"/>
<text x="0" y="0" font-size="7.1" letter-spacing="0.4" fill="#666" text-anchor="end" transform="translate(419.7,172.5) rotate(-45)">2 PM</text>
<rect x="432.94" y="146.09" width="10" height="15.91" fill="#ffff00" stroke="#333" stroke-width="1"/>
<rect x="427.50" y="162.00" width="1" height="6" fill="#ccd6eb"/>
<text x="0" y="0" font-size="7.1" letter-spacing="0.4" fill="#666" text-anchor="end" transform="translate(439.5,172.5) rotate(-45)">3 PM</text>
<rect x="452.81" y="137.74" width="10" height="24.26" fill="#ffff00" stroke="#333" stroke-width="1"/>
<rect x="447.37" y="162.00" width="1" height="6" fill="#ccd6eb"/>
<text x="0" y="0" font-size="7.1" letter-spacing="0.4" fill="#666" text-anchor="end" transform="translate(459.4,172.5) rotate(-45)">4 PM</text>
<rect x="472.68" y="122.94" width="10" height="39.06" fill="#ff0000" stroke="#333" stroke-width="1"/>
<rect x="467.24" y="162.00" width="1" height="6" fill="#ccd6eb"/>
<text x="0" y="0" font-size="7.1" letter-spacing="0.4" fill="#666" text-anchor="end" transform="translate(479.3,172.5) rotate(-45)">5 PM</text>
<rect x="492.54" y="124.40" width="10" height="37.60" fill="#ff0000" stroke="#333" stroke-width="1"/>
<rect x="487.11" y="162.00" width="1" height="6" fill="#ccd6eb"/>
<text x="0" y="0" font-size="7.1" letter-spacing="0.4" fill="#666" text-anchor="end" transform="translate(499.1,172.5) rotate(-45)">6 PM</text>
<rect x="512.41" y="124.40" width="10" height="37.60" fill="#ff0000" stroke="#333" stroke-width="1"/>
<rect x="506.98" y="162.00" width="1" height="6" fill="#ccd6eb"/>
<text x="0" y="0" font-size="7.1" letter-spacing="0.4" fill="#666" text-anchor="end" transform="translate(519.0,172.5) rotate(-45)">7 PM</text>
<rect x="526.85" y="162.00" width="1" height="6" fill="#ccd6eb"/>
</svg></div>

<div id="cc" class="abs">
  <div id="cchead" class="abs">
    <div class="abs" style="left:0;top:4px;width:166px;font-size:10px">Current Conditions</div>
    <div class="abs" style="left:0;top:20px;width:166px;font-size:8px">observed at</div>
    <div class="abs" style="left:0;top:33px;width:166px;font-size:10px">Nov 27, 2020 7:00 PM (LT)</div>
  </div>
  <div id="ccred" class="abs" style="padding-top:9.3px">155 AQI<br>Unhealthy<br>PM2.5</div>
  <div id="hm" class="abs">Health Message</div>
  <div id="hmt" class="abs">Everyone may begin to experience health effects when AQI values are between 151 and 200. Members of sensitive groups may experience more serious health effects.</div>
</div>
</body></html>
